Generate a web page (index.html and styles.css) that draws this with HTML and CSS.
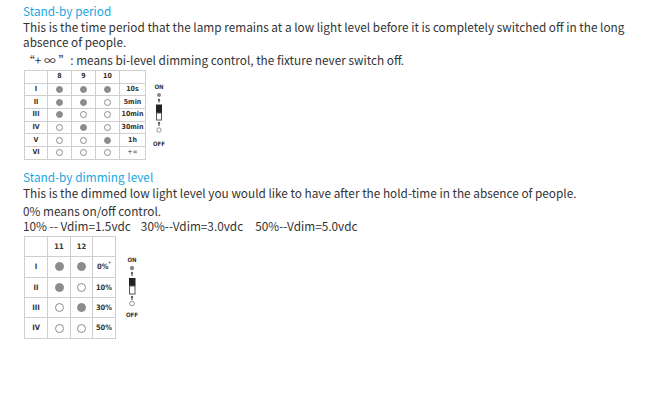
FILE: index.html
```html
<!DOCTYPE html>
<html>
<head>
<meta charset="utf-8">
<link rel="stylesheet" href="styles.css">
</head>
<body>
<div class="page">
  <h2 class="title">Stand-by period</h2>
  <p class="text">This is the time period that the lamp remains at a low light level before it is completely switched off in the long absence of people.</p>
  <p class="text gap">“+ ∞ ”: means bi-level dimming control, the fixture never switch off.</p>

  <div class="figure fig1">
    <table class="grid g1">
      <colgroup><col class="c1"><col class="c2"><col class="c2"><col class="c2"><col class="c5"></colgroup>
      <tr><td></td><td>8</td><td>9</td><td>10</td><td></td></tr>
      <tr><td>I</td><td><i class="dot on"></i></td><td><i class="dot on"></i></td><td><i class="dot on"></i></td><td>10s</td></tr>
      <tr><td>II</td><td><i class="dot on"></i></td><td><i class="dot on"></i></td><td><i class="dot"></i></td><td>5min</td></tr>
      <tr><td>III</td><td><i class="dot on"></i></td><td><i class="dot"></i></td><td><i class="dot"></i></td><td>10min</td></tr>
      <tr><td>IV</td><td><i class="dot"></i></td><td><i class="dot on"></i></td><td><i class="dot"></i></td><td>30min</td></tr>
      <tr><td>V</td><td><i class="dot"></i></td><td><i class="dot"></i></td><td><i class="dot on"></i></td><td>1h</td></tr>
      <tr><td>VI</td><td><i class="dot"></i></td><td><i class="dot"></i></td><td><i class="dot"></i></td><td class="inf">+∞</td></tr>
    </table>
    <div class="switch s1">
      <span class="lbl">ON</span>
      <svg width="14" height="46" viewBox="0 0 14 46">
        <circle cx="7" cy="3" r="2" fill="#8a8a8a"/>
        <path d="M7 10.5 V7.5" stroke="#333" stroke-width="1"/>
        <path d="M5.6 8.4 L7 6.2 L8.4 8.4 Z" fill="#333"/>
        <rect x="4" y="12.5" width="6" height="8.5" fill="#222"/>
        <rect x="4.5" y="21" width="5" height="7" fill="#fff" stroke="#555" stroke-width="1"/>
        <path d="M7 34 V30.5" stroke="#333" stroke-width="1"/>
        <path d="M5.6 31.6 L7 29.4 L8.4 31.6 Z" fill="#333"/>
        <circle cx="7" cy="38" r="2.2" fill="#fff" stroke="#777" stroke-width="0.8"/>
      </svg>
      <span class="lbl">OFF</span>
    </div>
  </div>

  <h2 class="title t2">Stand-by dimming level</h2>
  <p class="text">This is the dimmed low light level you would like to have after the hold-time in the absence of people.</p>
  <p class="text gap">0% means on/off control.</p>
  <p class="text"><span>10% -- Vdim=1.5vdc</span><span class="sp1">30%--Vdim=3.0vdc</span><span class="sp2">50%--Vdim=5.0vdc</span></p>

  <div class="figure fig2">
    <table class="grid g2">
      <colgroup><col class="d1"><col class="d2"><col class="d3"><col class="d4"></colgroup>
      <tr><td></td><td>11</td><td>12</td><td></td></tr>
      <tr><td>I</td><td><i class="dot on"></i></td><td><i class="dot on"></i></td><td>0%<sup>*</sup></td></tr>
      <tr><td>II</td><td><i class="dot on"></i></td><td><i class="dot"></i></td><td>10%</td></tr>
      <tr><td>III</td><td><i class="dot"></i></td><td><i class="dot on"></i></td><td>30%</td></tr>
      <tr><td>IV</td><td><i class="dot"></i></td><td><i class="dot"></i></td><td>50%</td></tr>
    </table>
    <div class="switch s2">
      <span class="lbl">ON</span>
      <svg width="14" height="44" viewBox="0 0 14 44">
        <circle cx="7" cy="3" r="2.2" fill="#8a8a8a"/>
        <path d="M7 11 V7.5" stroke="#333" stroke-width="1"/>
        <path d="M5.6 8.6 L7 6.4 L8.4 8.6 Z" fill="#333"/>
        <rect x="4" y="13" width="6.5" height="8" fill="#222"/>
        <rect x="4.5" y="21" width="5.5" height="8" fill="#fff" stroke="#555" stroke-width="1"/>
        <path d="M7 35 V31.5" stroke="#333" stroke-width="1"/>
        <path d="M5.6 32.6 L7 30.4 L8.4 32.6 Z" fill="#333"/>
        <circle cx="7" cy="38.5" r="2.3" fill="#fff" stroke="#777" stroke-width="0.8"/>
      </svg>
      <span class="lbl">OFF</span>
    </div>
  </div>
</div>
</body>
</html>
```

FILE: styles.css
```css
html, body {
  margin: 0;
  padding: 0;
  background: #fff;
}

.page {
  padding: 3px 0 0 23px;
  font-family: "Noto Sans CJK SC", "Noto Sans", sans-serif;
  font-size: 11.8px;
  font-weight: 400;
  color: #333;
}

.title {
  margin: 0;
  font-size: 11.8px;
  line-height: 16px;
  font-weight: 400;
  color: #1ba6e2;
}

.t2 {
  margin-top: 9px;
}

.text {
  margin: 0;
  line-height: 15px;
  width: 622px;
}

.gap {
  margin-top: 3px;
}

.sp1 {
  margin-left: 10px;
}

.sp2 {
  margin-left: 12px;
}

.figure {
  display: flex;
  align-items: center;
  margin-left: 1px;
}

.fig1 {
  margin-top: 3px;
  gap: 6px;
}

.fig2 {
  margin-top: 3px;
  gap: 9px;
}

.grid {
  border-collapse: collapse;
  table-layout: fixed;
  font-family: "DejaVu Sans Condensed", "DejaVu Sans", sans-serif;
  font-weight: bold;
  color: #333;
}

.grid td {
  border: 1px solid #cfcfcf;
  padding: 0;
  text-align: center;
  vertical-align: middle;
  line-height: 1;
  overflow: hidden;
}

.g1 {
  width: 121px;
}

.g1 .c1 { width: 23px; }
.g1 .c2 { width: 24px; }
.g1 .c5 { width: 26px; }

.g1 tr {
  height: 12.7px;
}

.g1 td {
  font-size: 7px;
}

.g2 {
  width: 91px;
}

.g2 .d1 { width: 23px; }
.g2 .d2 { width: 23px; }
.g2 .d3 { width: 22px; }
.g2 .d4 { width: 23px; }

.g2 tr {
  height: 20.4px;
}

.g2 td {
  font-size: 7.5px;
}

.inf {
  font-weight: normal;
  font-size: 8px;
}

sup {
  font-size: 5px;
  vertical-align: 4px;
  line-height: 0;
}

.dot {
  display: inline-block;
  box-sizing: border-box;
  width: 7px;
  height: 7px;
  border-radius: 50%;
  border: 1px solid #8c8c8c;
  background: #fff;
  vertical-align: middle;
}

.dot.on {
  background: #8c8c8c;
}

.g2 .dot {
  width: 9px;
  height: 9px;
  border-width: 1.3px;
}

.switch {
  display: flex;
  flex-direction: column;
  align-items: center;
  font-family: "DejaVu Sans Condensed", "DejaVu Sans", sans-serif;
  font-weight: bold;
  font-size: 6px;
  color: #333;
  width: 14px;
}

.switch .lbl {
  line-height: 7px;
}

.switch svg {
  display: block;
  margin: 2px 0;
}
```
